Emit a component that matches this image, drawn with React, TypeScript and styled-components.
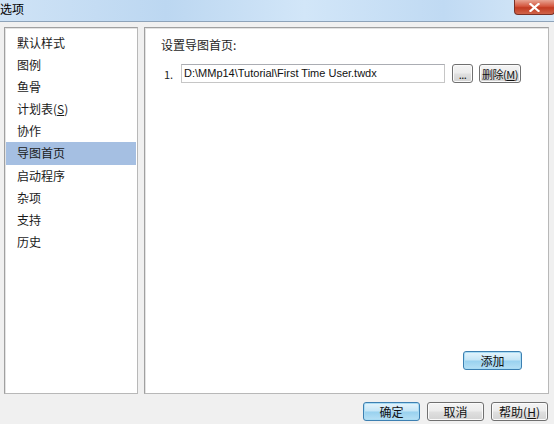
import React from 'react';
import styled, { createGlobalStyle } from 'styled-components';

const GlobalStyle = createGlobalStyle`
  html, body {
    margin: 0;
    padding: 0;
    background: #f0f0f0;
    font-family: "Noto Sans CJK SC", "Liberation Sans", sans-serif;
    font-size: 12px;
    color: #1e1e1e;
  }
`;

const Window = styled.div`
  width: 554px;
  height: 424px;
  display: flex;
  flex-direction: column;
  background: #f0f0f0;
  overflow: hidden;
`;

const TitleBar = styled.div`
  height: 22px;
  flex: none;
  display: flex;
  align-items: flex-start;
  justify-content: space-between;
  background: linear-gradient(90deg, #cfe3f6 0%, #bcd7f1 30%, #d2e6f8 55%, #c0daf3 80%, #d6e8f8 100%);
  border-bottom: 1px solid #8ea3b9;
  box-sizing: border-box;
`;

const Title = styled.span`
  font-size: 12px;
  line-height: 18px;
  color: #000;
`;

const CloseBtn = styled.div`
  width: 41px;
  height: 15px;
  margin-right: -1px;
  border: 1px solid #7a3126;
  border-top: none;
  border-radius: 0 0 4px 4px;
  background: linear-gradient(180deg, #e8a493 0%, #d4573f 45%, #c23b22 55%, #d0644a 100%);
  display: flex;
  align-items: center;
  justify-content: center;
  box-sizing: border-box;
`;

const Body = styled.div`
  flex: 1;
  display: flex;
  flex-direction: column;
  padding: 5px 5px 0 4px;
`;

const Panels = styled.div`
  display: flex;
  gap: 6px;
  height: 367px;
`;

const Panel = styled.div<{ $width?: number }>`
  box-sizing: border-box;
  ${(p) => (p.$width ? `width: ${p.$width}px; flex: none;` : 'flex: 1;')}
  background: #fff;
  border: 1px solid #a0a0a0;
  border-right-color: #b8b8b8;
  border-bottom-color: #b8b8b8;
  box-shadow: inset 1px 1px 0 #e3e3e3;
  display: flex;
  flex-direction: column;
`;

const NavList = styled.ul`
  list-style: none;
  margin: 0;
  padding: 4px 0 0;
`;

const NavItem = styled.li<{ $active?: boolean }>`
  height: 22.1px;
  line-height: 22px;
  padding-left: 11px;
  background: ${(p) => (p.$active ? '#a5bfe2' : 'transparent')};
  color: #1a1a1a;
  margin: 0 1px;
`;

const Content = styled.div`
  padding: 8px 26px 0 16px;
  display: flex;
  flex-direction: column;
  flex: 1;
`;

const Heading = styled.div`
  line-height: 18px;
`;

const Row = styled.div`
  display: flex;
  align-items: center;
  margin-top: 10px;
`;

const Index = styled.span`
  width: 20px;
  padding-left: 3px;
  box-sizing: border-box;
  font-size: 11px;
`;

const PathInput = styled.div`
  width: 264px;
  height: 19px;
  box-sizing: border-box;
  border: 1px solid #c6c6c6;
  border-top-color: #abadb3;
  background: #fff;
  padding-left: 2px;
  font-family: "Liberation Sans", "Noto Sans CJK SC", sans-serif;
  font-size: 11px;
  line-height: 17px;
  color: #111;
`;

const Button = styled.button<{ $w: number; $h?: number; $primary?: boolean; $small?: boolean }>`
  width: ${(p) => p.$w}px;
  height: ${(p) => p.$h || 19}px;
  box-sizing: border-box;
  padding: 0;
  white-space: nowrap;
  border: 1px solid ${(p) => (p.$primary ? '#3c7fb1' : '#707070')};
  border-radius: 3px;
  background: ${(p) =>
    p.$primary
      ? 'linear-gradient(180deg, #e5f4fc 0%, #c4e5f6 48%, #98d1ef 52%, #b6e0f5 100%)'
      : 'linear-gradient(180deg, #f4f4f4 0%, #ececec 48%, #e0e0e0 52%, #d3d3d3 100%)'};
  box-shadow: inset 0 0 0 1px ${(p) => (p.$primary ? '#a9dcf4' : '#fbfbfb')};
  font-family: "Noto Sans CJK SC", "Liberation Sans", sans-serif;
  font-size: ${(p) => (p.$small ? 11 : 12)}px;
  letter-spacing: ${(p) => (p.$small ? '-0.5px' : '0')};
  color: #111;
  display: flex;
  align-items: center;
  justify-content: center;
`;

const Spacer = styled.div`
  flex: 1;
`;

const AddRow = styled.div`
  display: flex;
  justify-content: flex-end;
  padding-bottom: 23px;
`;

const Footer = styled.div`
  display: flex;
  justify-content: flex-end;
  gap: 7px;
  padding: 8px 1px 0 0;
`;

const Ul = styled.span`
  text-decoration: underline;
`;

const navItems = ['默认样式', '图例', '鱼骨', '计划表(S)', '协作', '导图首页', '启动程序', '杂项', '支持', '历史'];

export default function App() {
  return (
    <Window>
      <GlobalStyle />
      <TitleBar>
        <Title>选项</Title>
        <CloseBtn>
          <svg width="11" height="9" viewBox="0 0 11 9">
            <path d="M1.5 1 L9.5 8 M9.5 1 L1.5 8" stroke="#fff" strokeWidth="2.2" strokeLinecap="square" />
          </svg>
        </CloseBtn>
      </TitleBar>
      <Body>
        <Panels>
          <Panel $width={134}>
            <NavList>
              {navItems.map((item) => (
                <NavItem key={item} $active={item === '导图首页'}>
                  {item === '计划表(S)' ? (
                    <>
                      计划表(<Ul>S</Ul>)
                    </>
                  ) : (
                    item
                  )}
                </NavItem>
              ))}
            </NavList>
          </Panel>
          <Panel>
            <Content>
              <Heading>设置导图首页:</Heading>
              <Row>
                <Index>1.</Index>
                <PathInput>D:\MMp14\Tutorial\First Time User.twdx</PathInput>
                <Button $w={21} $small style={{ marginLeft: 7 }}>...</Button>
                <Button $w={42} $small style={{ marginLeft: 6 }}>
                  删除(<Ul>M</Ul>)
                </Button>
              </Row>
              <Spacer />
              <AddRow>
                <Button $w={59} $primary>
                  添加
                </Button>
              </AddRow>
            </Content>
          </Panel>
        </Panels>
        <Footer>
          <Button $w={57} $h={19} $primary>
            确定
          </Button>
          <Button $w={57} $h={19}>
            取消
          </Button>
          <Button $w={57} $h={19}>
            帮助(<Ul>H</Ul>)
          </Button>
        </Footer>
      </Body>
    </Window>
  );
}
